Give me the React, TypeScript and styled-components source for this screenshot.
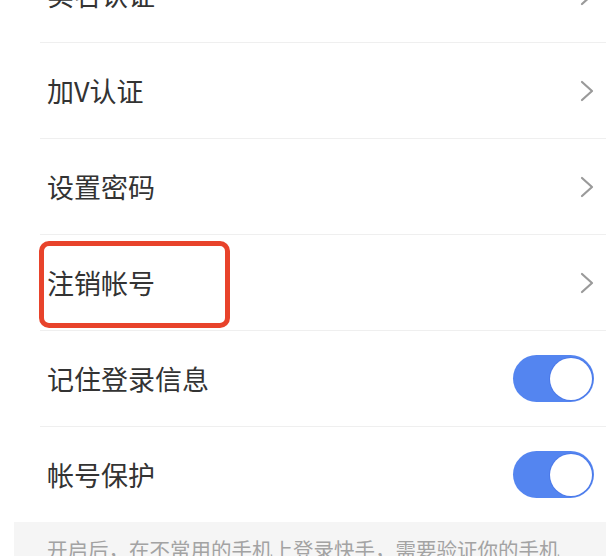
import React from "react";
import styled, { createGlobalStyle } from "styled-components";

const Global = createGlobalStyle`
  html, body {
    margin: 0;
    padding: 0;
    background: #ffffff;
    overflow: hidden;
  }
  body {
    font-family: "Noto Sans CJK SC", "Noto Sans", sans-serif;
  }
`;

const Page = styled.div`
  width: 606px;
  height: 556px;
  overflow: hidden;
  background: #ffffff;
`;

const List = styled.div`
  margin-top: -53px;
  display: flex;
  flex-direction: column;
`;

const Row = styled.div<{ $last?: boolean }>`
  position: relative;
  margin-left: 40px;
  height: 95px;
  padding: 0 12px 0 7px;
  display: flex;
  align-items: center;
  justify-content: space-between;
  border-bottom: ${(p) => (p.$last ? "none" : "1px solid #efefef")};
  box-sizing: content-box;
`;

const Label = styled.span`
  font-size: 27px;
  color: #333333;
  line-height: 1;
  letter-spacing: 0;
`;

const Chevron = styled.svg`
  width: 14px;
  height: 22px;
  display: block;
`;

const Toggle = styled.div<{ $on: boolean }>`
  width: 81px;
  height: 47px;
  border-radius: 24px;
  background: ${(p) => (p.$on ? "#5485f0" : "#e5e5e5")};
  display: flex;
  align-items: center;
  justify-content: ${(p) => (p.$on ? "flex-end" : "flex-start")};
  padding: 0 2px;
  box-sizing: border-box;
`;

const Knob = styled.div`
  width: 42px;
  height: 42px;
  border-radius: 50%;
  background: #ffffff;
  box-shadow: 0 0 0 1px rgba(60, 100, 220, 0.35);
`;

const Highlight = styled.div`
  position: absolute;
  top: 6px;
  left: -1px;
  width: 191px;
  height: 87px;
  border: 5px solid #e8432b;
  border-radius: 10px;
  box-sizing: border-box;
  pointer-events: none;
`;

const Footer = styled.div`
  margin-left: 14px;
  background: #f5f5f5;
  padding: 12px 0 0 33px;
  height: 60px;
  font-size: 20.5px;
  line-height: 30px;
  color: #a3a3a3;
  white-space: nowrap;
`;

const Arrow = () => (
  <Chevron viewBox="0 0 14 22">
    <polyline
      points="2,2 12,11 2,20"
      fill="none"
      stroke="#9a9a9a"
      strokeWidth="2.2"
      strokeLinecap="round"
      strokeLinejoin="round"
    />
  </Chevron>
);

type Item = { label: string; kind: "arrow" | "toggle"; highlight?: boolean };

const items: Item[] = [
  { label: "实名认证", kind: "arrow" },
  { label: "加V认证", kind: "arrow" },
  { label: "设置密码", kind: "arrow" },
  { label: "注销帐号", kind: "arrow", highlight: true },
  { label: "记住登录信息", kind: "toggle" },
  { label: "帐号保护", kind: "toggle" },
];

export default function App() {
  return (
    <Page>
      <Global />
      <List>
        {items.map((it, i) => (
          <Row key={it.label} $last={i === items.length - 1}>
            <Label>{it.label}</Label>
            {it.kind === "arrow" ? (
              <Arrow />
            ) : (
              <Toggle $on>
                <Knob />
              </Toggle>
            )}
            {it.highlight && <Highlight />}
          </Row>
        ))}
      </List>
      <Footer>开启后，在不常用的手机上登录快手，需要验证你的手机</Footer>
    </Page>
  );
}
